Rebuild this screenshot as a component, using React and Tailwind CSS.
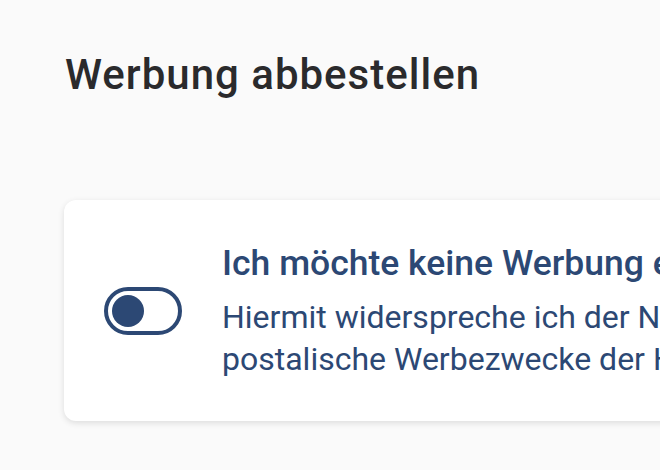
import React, { useState } from 'react';

function Toggle({ on, onChange }) {
  return (
    <button
      type="button"
      onClick={() => onChange(!on)}
      className="relative flex h-[48px] w-[78px] shrink-0 items-center rounded-full border-[4px] border-[#2c4874] bg-white px-[4px]"
    >
      <span
        className={`block h-[32px] w-[32px] rounded-full bg-[#2c4874] transition-transform ${on ? 'translate-x-[30px]' : ''}`}
      />
    </button>
  );
}

export default function App() {
  const [optOut, setOptOut] = useState(false);

  return (
    <div className="h-[470px] w-[660px] overflow-hidden bg-[#fafafa] font-['Roboto',sans-serif]">
      <div className="pl-[65px] pt-[51px]">
        <h1 className="whitespace-nowrap text-[42px] font-medium leading-[48px] tracking-[1px] text-[#2a2a2c]">Werbung abbestellen</h1>
      </div>

      {/* Card */}
      <div className="ml-[64px] mt-[101px] w-[1000px] rounded-[12px] bg-white shadow-[0_2px_6px_rgba(0,0,0,0.12)]">
        <div className="flex items-center gap-[40px] pb-[41px] pl-[40px] pt-[42px]">
          <Toggle on={optOut} onChange={setOptOut} />
          <div className="text-[#2c4874]">
            <h2 className="whitespace-nowrap text-[35.5px] font-medium leading-[42px]">Ich möchte keine Werbung erhalten</h2>
            <p className="mt-[12px] whitespace-nowrap text-[32px] leading-[42px]">
              Hiermit widerspreche ich der Nutzung meiner Daten für
              <br />
              postalische Werbezwecke der Helvetia.
            </p>
          </div>
        </div>
      </div>
    </div>
  );
}
